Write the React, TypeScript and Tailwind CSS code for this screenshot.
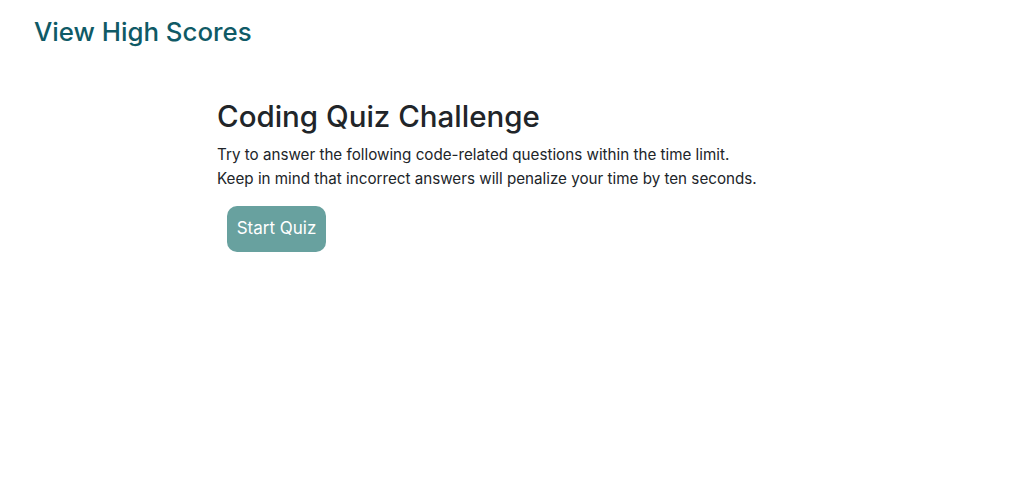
export default function App() {
  return (
    <div className="min-h-screen bg-white font-['Inter',sans-serif] text-[#212529]">
      <header className="px-[34px] pt-[15px]">
        <a href="#" className="text-[25.8px] leading-[34px] font-medium text-[#0f5a66]">
          View High Scores
        </a>
      </header>
      <main className="mx-auto w-[584px] pt-[48px]">
        <h1 className="text-[29.5px] leading-[38px] font-medium">Coding Quiz Challenge</h1>
        <p className="mt-[8px] text-[15.2px] leading-[24px]">
          Try to answer the following code-related questions within the time limit.
          <br />
          Keep in mind that incorrect answers will penalize your time by ten seconds.
        </p>
        <button className="ml-[10px] mt-[15px] h-[46px] w-[99px] rounded-[10px] bg-[#68a19f] text-[17px] text-white">
          Start Quiz
        </button>
      </main>
    </div>
  );
}
